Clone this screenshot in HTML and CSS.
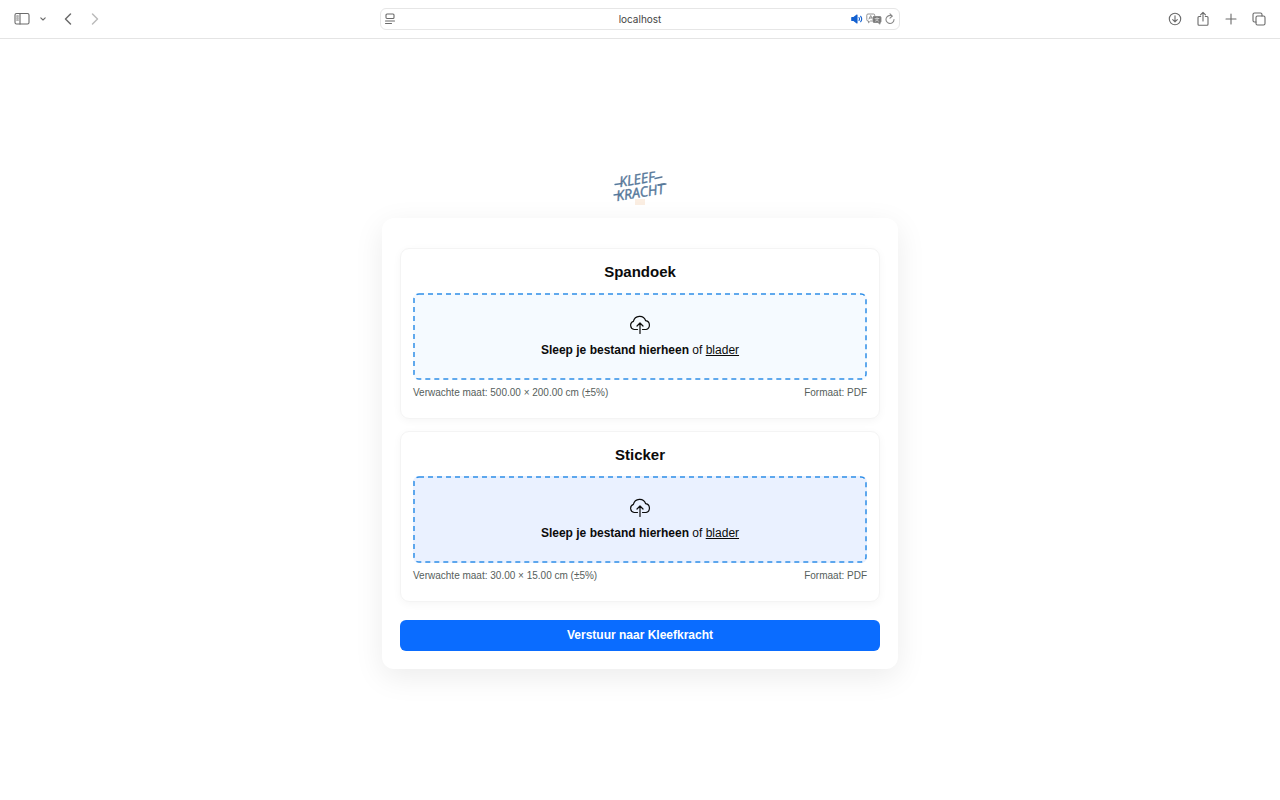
FILE: index.html
```html
<!DOCTYPE html>
<html lang="nl">
<head>
    <meta charset="UTF-8">
    <meta name="viewport" content="width=device-width, initial-scale=1.0">
    <title>Kleefkracht</title>
    <link rel="stylesheet" href="styles.css">
</head>
<body>
    <header class="toolbar">
        <div class="tools">
            <button class="tool sidebar" aria-label="Sidebar">
                <svg width="16" height="14" viewBox="0 0 16 14"><rect x="1" y="1.5" width="14" height="10.5" rx="1.5"/><path d="M6 1.5v10.5M2.7 4h1.6M2.7 6h1.6M2.7 8h1.6"/></svg>
            </button>
            <button class="tool chevron" aria-label="Tab groups">
                <svg width="6" height="6" viewBox="0 0 6 6"><path d="M.8 1.8L3 4l2.200-2.200"/></svg>
            </button>
            <button class="tool back" aria-label="Back">
                <svg width="8" height="14" viewBox="0 0 8 14"><path class="bold" d="M6.500 2L1.500 7l5 5"/></svg>
            </button>
            <button class="tool forward" aria-label="Forward">
                <svg width="8" height="14" viewBox="0 0 8 14"><path class="bold" d="M1.500 2l5 5-5 5"/></svg>
            </button>
        </div>
        <div class="address">
            <button class="tool" aria-label="Page menu">
                <svg width="10" height="12" viewBox="0 0 10 12"><rect x="1" y="1" width="8" height="4.500" rx="1"/><path d="M.500 8h9M.500 10.500h6"/></svg>
            </button>
            <input class="url" type="text" value="localhost" aria-label="Address">
            <button class="tool sound" aria-label="Mute">
                <svg width="12" height="12" viewBox="0 0 12 12"><path class="fill" d="M.800 4.500h2L6 2v8L2.800 7.500h-2z"/><path d="M8 4.500q1 1.500 0 3M9.700 3.300q2 2.700 0 5.400"/></svg>
            </button>
            <button class="tool translate" aria-label="Translate">
                <svg width="16" height="12" viewBox="0 0 16 12"><path d="M6 8H4.500L2.500 9.800V8H2Q.800 8 .800 6.800V2.200Q.800 1 2 1h5.500Q8.700 1 8.700 2.200v1"/><path d="M3 6l1.700-3.500L6 5M3.700 5h2"/><path class="fill" d="M8 3.500h6q1 0 1 1v4q0 1-1 1v1.700L12 9.500H8q-1 0-1-1v-4q0-1 1-1z"/><path class="light" d="M9 5.500h4M11 4.500v1M12.500 5.500Q11.500 8 9.300 8.300M9.800 6.300q1 1.500 3 2"/></svg>
            </button>
            <button class="tool reload" aria-label="Reload">
                <svg width="10" height="12" viewBox="0 0 10 12"><path d="M7.300 3.200A4 4 0 1 0 9 6.500M5 .900L7.300 3.200 5 5.200"/></svg>
            </button>
        </div>
        <div class="tools right">
            <button class="tool" aria-label="Downloads">
                <svg width="14" height="14" viewBox="0 0 14 14"><circle cx="7" cy="7" r="5.700"/><path d="M7 3.800v6M4.700 7.600L7 9.900l2.300-2.300"/></svg>
            </button>
            <button class="tool" aria-label="Share">
                <svg width="14" height="16" viewBox="0 0 14 16"><path d="M4.700 5.500H3Q2 5.500 2 6.500v6.700q0 1 1 1h8q1 0 1-1V6.500q0-1-1-1H9.300M7 10V1.500M4.500 3.800L7 1.300l2.500 2.500"/></svg>
            </button>
            <button class="tool" aria-label="New tab">
                <svg width="14" height="14" viewBox="0 0 14 14"><path d="M7 2v10M2 7h10"/></svg>
            </button>
            <button class="tool" aria-label="Show tabs">
                <svg width="14" height="14" viewBox="0 0 14 14"><rect x="4" y="4" width="9" height="9" rx="1.500"/><path d="M4 10H2.500Q1 10 1 8.500v-6Q1 1 2.500 1h6Q10 1 10 2.500V4"/></svg>
            </button>
        </div>
    </header>

    <main class="page">
        <svg class="logo" width="54" height="36" viewBox="0 0 54 36" role="img" aria-label="Kleefkracht">
            <rect class="logo-tag" x="22" y="29" width="10" height="6"/>
            <g class="logo-text">
                <text transform="translate(7 17) rotate(-9)">KLEEF</text>
                <text transform="translate(4 31) rotate(-9)">KRACHT</text>
            </g>
            <path class="logo-line" d="M2 14.500l7-1M42 8.500l7-1.500M1 25l7-1M45 15l8-1"/>
        </svg>

        <form class="card">
            <section class="item">
                <h2>Spandoek</h2>
                <div class="dropzone">
                    <svg class="outline" aria-hidden="true"><rect x="1" y="1" rx="5"/></svg>
                    <svg class="cloud" width="22" height="20" viewBox="0 0 22 20"><path d="M8.500 14.500H5.200A4.200 4.200 0 0 1 4.400 6.400A6.400 6.400 0 0 1 16.700 5.700A4.500 4.500 0 0 1 17 14.500H13.500M11 18.500V8.300M8 11l3-3 3 3"/></svg>
                    <p><label for="spandoek">Sleep je bestand hierheen</label> of <a href="#spandoek">blader</a></p>
                    <input class="file" id="spandoek" type="file" accept="application/pdf">
                </div>
                <div class="meta">
                    <span>Verwachte maat: 500.00 × 200.00 cm (±5%)</span>
                    <span>Formaat: PDF</span>
                </div>
            </section>

            <section class="item">
                <h2>Sticker</h2>
                <div class="dropzone active">
                    <svg class="outline" aria-hidden="true"><rect x="1" y="1" rx="5"/></svg>
                    <svg class="cloud" width="22" height="20" viewBox="0 0 22 20"><path d="M8.500 14.500H5.200A4.200 4.200 0 0 1 4.400 6.400A6.400 6.400 0 0 1 16.700 5.700A4.500 4.500 0 0 1 17 14.500H13.500M11 18.500V8.300M8 11l3-3 3 3"/></svg>
                    <p><label for="sticker">Sleep je bestand hierheen</label> of <a href="#sticker">blader</a></p>
                    <input class="file" id="sticker" type="file" accept="application/pdf">
                </div>
                <div class="meta">
                    <span>Verwachte maat: 30.00 × 15.00 cm (±5%)</span>
                    <span>Formaat: PDF</span>
                </div>
            </section>

            <button class="submit" type="submit">Verstuur naar Kleefkracht</button>
        </form>
    </main>
</body>
</html>
```

FILE: styles.css
```css
*{
    box-sizing: border-box;
}
body{
    margin: 0;
    min-height: 100vh;
    display: flex;
    flex-direction: column;
    background: #fff;
    color: #0b0b0b;
    font-family: "Liberation Sans", Arial, sans-serif;
    font-size: 12px;
}

/* browser bar */
.toolbar{
    display: grid;
    grid-template-columns: 1fr minmax(200px, 520px) 1fr;
    align-items: center;
    padding: 8px 14px;
    border-bottom: 1px solid #e4e4e4;
}
.tools{
    display: flex;
    align-items: center;
}
.tools.right{
    justify-content: flex-end;
    gap: 14px;
}
.tool{
    display: flex;
    padding: 0;
    border: 0;
    background: none;
}
.tool svg{
    fill: none;
    stroke: #6b6b6b;
    stroke-width: 1.1;
    stroke-linecap: round;
    stroke-linejoin: round;
}
.tool .bold{
    stroke-width: 1.5;
}
.tool .fill{
    fill: #777;
}
.chevron{
    margin-left: 10px;
}
.back{
    margin-left: 18px;
}
.forward{
    margin-left: 19px;
}
.forward svg{
    stroke: #bbb;
}
.address{
    display: flex;
    align-items: center;
    gap: 3px;
    height: 22px;
    padding: 0 4px;
    border: 1px solid #e6e6e6;
    border-radius: 6px;
}
.url{
    flex: 1;
    min-width: 0;
    padding: 0 0 0 34px;
    border: 0;
    background: none;
    color: #444;
    font-family: Inter, sans-serif;
    font-size: 10px;
    text-align: center;
}
.sound svg{
    stroke: #1260d0;
}
.tool.sound .fill{
    fill: #1260d0;
}
.translate svg{
    stroke: #888;
    stroke-width: 0.9;
}
.translate .light{
    stroke: #ddd;
    stroke-width: 0.7;
}
.reload svg{
    stroke: #888;
}

/* upload page */
.page{
    flex: 1;
    display: flex;
    flex-direction: column;
    align-items: center;
    justify-content: center;
    gap: 12px;
    padding: 0 12px;
}
.logo{
    overflow: visible;
}
.logo-text{
    fill: #56789a;
    stroke: #56789a;
    stroke-width: 0.4;
    font-family: "Open Sans", sans-serif;
    font-size: 14px;
    font-style: italic;
}
.logo-line{
    fill: none;
    stroke: #56789a;
    stroke-width: 1.3;
    stroke-linecap: round;
}
.logo-tag{
    fill: #fbeee2;
}
.card{
    width: 100%;
    max-width: 516px;
    padding: 30px 18px 18px;
    border-radius: 12px;
    background: #fff;
    box-shadow: 0 8px 30px rgba(0, 0, 0, 0.08);
}
.item{
    margin-bottom: 12px;
    padding: 12px 12px 18px;
    border: 1px solid #f4f4f4;
    border-radius: 9px;
    box-shadow: 0 2px 8px rgba(0, 0, 0, 0.04);
}
.item h2{
    margin: 0 0 10px;
    font-size: 15px;
    line-height: 22px;
    text-align: center;
}
.dropzone{
    position: relative;
    display: flex;
    flex-direction: column;
    align-items: center;
    padding: 22px 12px 21px;
    border-radius: 6px;
    background: #f5faff;
}
.dropzone.active{
    background: #eaf1ff;
}
/* dashed edge, drawn over the box */
.outline{
    position: absolute;
    inset: 0;
    width: 100%;
    height: 100%;
    pointer-events: none;
}
.outline rect{
    width: calc(100% - 2px);
    height: calc(100% - 2px);
    fill: none;
    stroke: #2f8fe8;
    stroke-width: 1.5;
    stroke-dasharray: 5 4;
}
.dropzone p{
    margin: 6px 0 0;
    line-height: 18px;
}
.dropzone label{
    font-weight: bold;
}
.dropzone a{
    color: inherit;
}
.cloud{
    fill: none;
    stroke: #0b0b0b;
    stroke-width: 1.2;
    stroke-linecap: round;
    stroke-linejoin: round;
}
.file{
    position: absolute;
    width: 1px;
    height: 1px;
    opacity: 0;
}
.meta{
    display: flex;
    justify-content: space-between;
    margin-top: 6px;
    color: #56605c;
    font-size: 10px;
    line-height: 14px;
}
.submit{
    display: block;
    width: 100%;
    margin-top: 18px;
    padding: 8px;
    border: 0;
    border-radius: 6px;
    background: #0a6cff;
    color: #fff;
    font-family: inherit;
    font-size: 12px;
    font-weight: bold;
    line-height: 15px;
}
```
